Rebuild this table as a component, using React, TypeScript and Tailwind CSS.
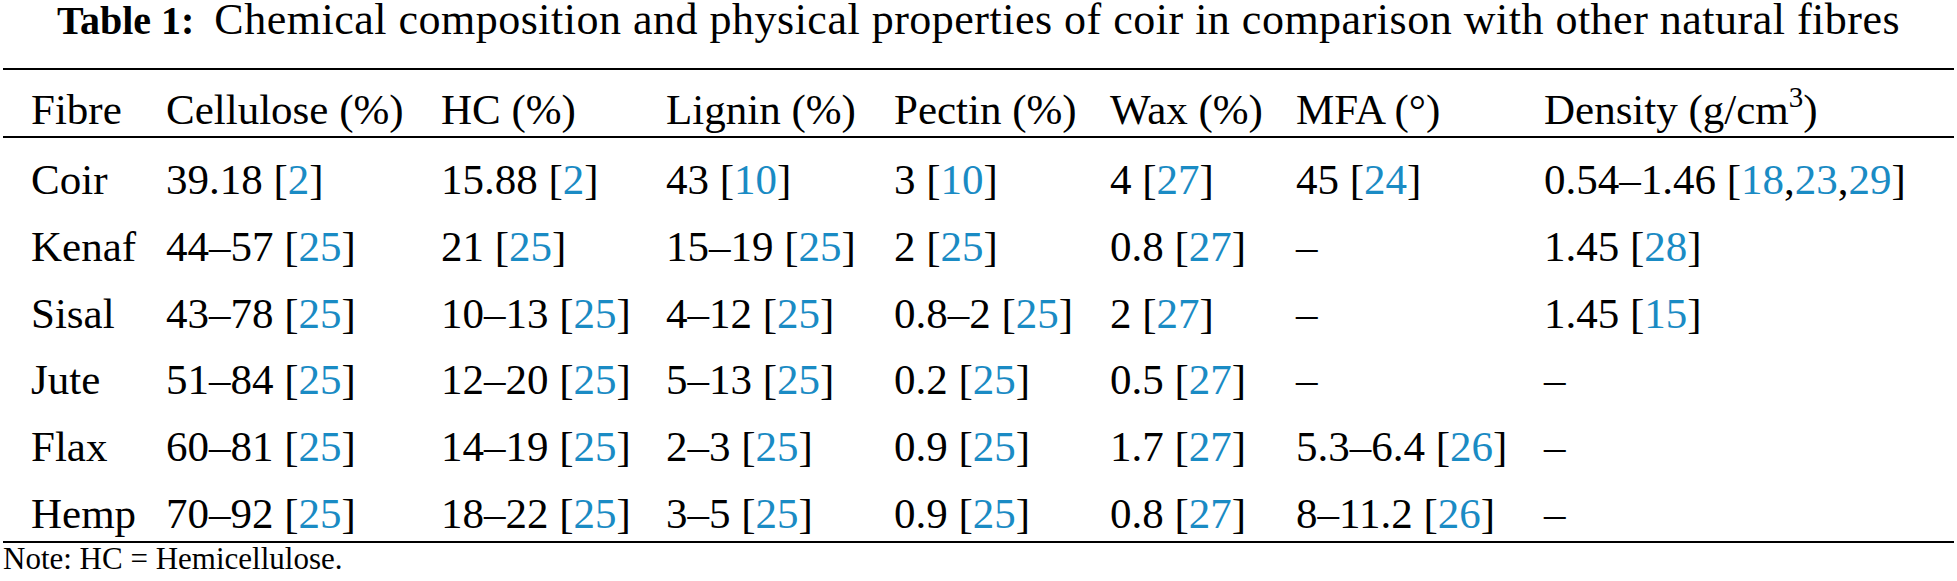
import React from "react";

type Cell = { v: string; r?: number[] };

const rows: { name: string; cells: Cell[] }[] = [
  {
    name: "Coir",
    cells: [
      { v: "39.18", r: [2] },
      { v: "15.88", r: [2] },
      { v: "43", r: [10] },
      { v: "3", r: [10] },
      { v: "4", r: [27] },
      { v: "45", r: [24] },
      { v: "0.54–1.46", r: [18, 23, 29] },
    ],
  },
  {
    name: "Kenaf",
    cells: [
      { v: "44–57", r: [25] },
      { v: "21", r: [25] },
      { v: "15–19", r: [25] },
      { v: "2", r: [25] },
      { v: "0.8", r: [27] },
      { v: "–" },
      { v: "1.45", r: [28] },
    ],
  },
  {
    name: "Sisal",
    cells: [
      { v: "43–78", r: [25] },
      { v: "10–13", r: [25] },
      { v: "4–12", r: [25] },
      { v: "0.8–2", r: [25] },
      { v: "2", r: [27] },
      { v: "–" },
      { v: "1.45", r: [15] },
    ],
  },
  {
    name: "Jute",
    cells: [
      { v: "51–84", r: [25] },
      { v: "12–20", r: [25] },
      { v: "5–13", r: [25] },
      { v: "0.2", r: [25] },
      { v: "0.5", r: [27] },
      { v: "–" },
      { v: "–" },
    ],
  },
  {
    name: "Flax",
    cells: [
      { v: "60–81", r: [25] },
      { v: "14–19", r: [25] },
      { v: "2–3", r: [25] },
      { v: "0.9", r: [25] },
      { v: "1.7", r: [27] },
      { v: "5.3–6.4", r: [26] },
      { v: "–" },
    ],
  },
  {
    name: "Hemp",
    cells: [
      { v: "70–92", r: [25] },
      { v: "18–22", r: [25] },
      { v: "3–5", r: [25] },
      { v: "0.9", r: [25] },
      { v: "0.8", r: [27] },
      { v: "8–11.2", r: [26] },
      { v: "–" },
    ],
  },
];

function CellView({ c }: { c: Cell }) {
  if (!c.r) return <span>{c.v}</span>;
  return (
    <span>
      {c.v} [
      {c.r.map((n, i) => (
        <React.Fragment key={n}>
          {i > 0 && ","}
          <span className="text-[#1a8bc4]">{n}</span>
        </React.Fragment>
      ))}
      ]
    </span>
  );
}

const gridCols =
  "grid grid-cols-[135px_275px_225px_228px_216px_186px_248px_1fr] pl-[28px]";

export default function App() {
  return (
    <div className="w-[1957px] h-[581px] bg-white text-black overflow-hidden font-['Liberation_Serif','Times_New_Roman',serif]">
      <div className="text-center text-[40px] leading-[40px] whitespace-nowrap">
        <span className="font-bold">Table 1:</span>
        <span className="inline-block w-[20px]" />
        <span className="text-[44px] tracking-[0.5px]">
          Chemical composition and physical properties of coir in comparison with other natural fibres
        </span>
      </div>
      <div className="px-[3px]">
        <div className="mt-[27px] h-[2px] bg-black" />
        <div className={`${gridCols} pt-[18px] pb-[5px] text-[43px] leading-[43px] whitespace-nowrap`}>
          <div>Fibre</div>
          <div>Cellulose (%)</div>
          <div>HC (%)</div>
          <div>Lignin (%)</div>
          <div>Pectin (%)</div>
          <div>Wax (%)</div>
          <div>MFA (°)</div>
          <div>
            Density (g/cm<sup className="text-[29px] relative -top-[17px] align-baseline">3</sup>)
          </div>
        </div>
        <div className="h-[2px] bg-black" />
        <div
          className={`${gridCols} gap-y-[23.8px] pt-[20px] pb-[6px] text-[43px] leading-[43px] whitespace-nowrap`}
        >
          {rows.map((row) => (
            <React.Fragment key={row.name}>
              <div>{row.name}</div>
              {row.cells.map((c, i) => (
                <div key={i}>
                  <CellView c={c} />
                </div>
              ))}
            </React.Fragment>
          ))}
        </div>
        <div className="h-[2px] bg-black" />
        <div className="text-[31px] leading-[31px] whitespace-nowrap">Note: HC = Hemicellulose.</div>
      </div>
    </div>
  );
}
